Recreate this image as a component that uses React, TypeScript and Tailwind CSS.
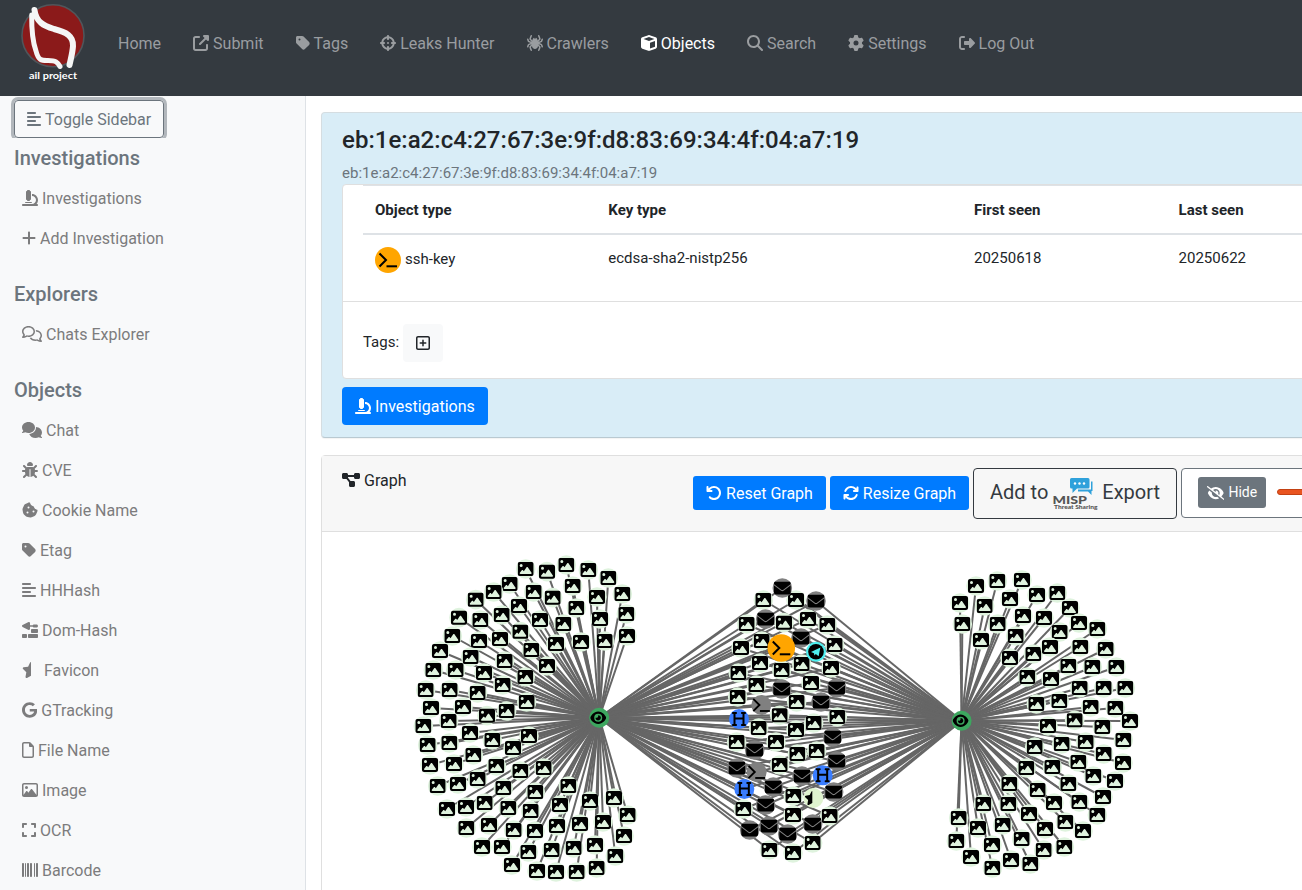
import type { ReactNode } from "react";
import type { IconType } from "react-icons";
import {
  FaUpRightFromSquare, FaTag, FaCrosshairs, FaSpider, FaCube, FaMagnifyingGlass, FaGear,
  FaRightFromBracket, FaAlignLeft, FaMicroscope, FaPlus, FaRegComments, FaComments, FaBug,
  FaCookieBite, FaTrowelBricks, FaStarHalf, FaGoogle, FaRegFile, FaRegImage, FaExpand,
  FaBarcode, FaArrowRotateLeft, FaArrowsRotate, FaEyeSlash, FaDiagramProject, FaRegSquarePlus,
  FaImage, FaEnvelope, FaHeading, FaEye,
} from "react-icons/fa6";

type Point = [number, number];
type Item = { label: string; icon?: IconType; width?: string; active?: boolean };

const NAV: Item[] = [
  { label: "Home" },
  { label: "Submit", icon: FaUpRightFromSquare, width: "w-4" },
  { label: "Tags", icon: FaTag, width: "w-3.5" },
  { label: "Leaks Hunter", icon: FaCrosshairs, width: "w-4" },
  { label: "Crawlers", icon: FaSpider, width: "w-4" },
  { label: "Objects", icon: FaCube, width: "w-4", active: true },
  { label: "Search", icon: FaMagnifyingGlass, width: "w-4" },
  { label: "Settings", icon: FaGear, width: "w-4" },
  { label: "Log Out", icon: FaRightFromBracket, width: "w-4" },
];

const SECTIONS: { title: string; items: Item[] }[] = [
  {
    title: "Investigations",
    items: [
      { label: "Investigations", icon: FaMicroscope, width: "w-4" },
      { label: "Add Investigation", icon: FaPlus, width: "w-3.5" },
    ],
  },
  { title: "Explorers", items: [{ label: "Chats Explorer", icon: FaRegComments, width: "w-5" }] },
  {
    title: "Objects",
    items: [
      { label: "Chat", icon: FaComments, width: "w-5" },
      { label: "CVE", icon: FaBug, width: "w-4" },
      { label: "Cookie Name", icon: FaCookieBite, width: "w-4" },
      { label: "Etag", icon: FaTag, width: "w-3.5" },
      { label: "HHHash", icon: FaAlignLeft, width: "w-3.5" },
      { label: "Dom-Hash", icon: FaTrowelBricks, width: "w-4" },
      { label: "Favicon", icon: FaStarHalf, width: "w-[18px]" },
      { label: "GTracking", icon: FaGoogle, width: "w-[15.25px]" },
      { label: "File Name", icon: FaRegFile, width: "w-3" },
      { label: "Image", icon: FaRegImage, width: "w-4" },
      { label: "OCR", icon: FaExpand, width: "w-3.5" },
      { label: "Barcode", icon: FaBarcode, width: "w-4" },
    ],
  },
];

/* Node positions are stored at triple resolution, relative to a cluster origin. */
function place(ox: number, oy: number, list: Point[]): Point[] {
  return list.map(([x, y]) => [ox + x / 3, oy + y / 3]);
}

const LEFT_HUB: Point = [599.2, 717.8];
const RIGHT_HUB: Point = [961.6, 720.7];

const LEFT = [
  ...place(405, 545, [
    [362, 72], [426, 80], [484, 60], [550, 75], [610, 99], [314, 117], [266, 141], [386, 141],
    [443, 158], [503, 123], [576, 156], [652, 147], [212, 164], [342, 183], [514, 189], [664, 207],
    [162, 218], [226, 225], [290, 210], [405, 225], [475, 237], [585, 222], [142, 273], [222, 288],
    [285, 282], [346, 260], [453, 297], [528, 291], [599, 288], [666, 273], [105, 318], [197, 336],
    [379, 315], [299, 348], [426, 363], [85, 375], [152, 375], [237, 384], [361, 396], [293, 420],
    [62, 435], [134, 435], [218, 444], [78, 489], [174, 486], [305, 498], [365, 471], [246, 512],
  ]),
  ...place(405, 715, [
    [55, 33], [131, 18], [195, 54], [68, 90], [133, 84], [262, 75], [372, 63], [324, 99], [75, 150],
    [147, 147], [205, 120], [274, 153], [346, 168], [416, 159], [98, 213], [159, 207], [218, 192],
    [295, 219], [391, 231], [490, 213], [126, 282], [183, 276], [239, 264], [310, 279], [377, 288],
    [465, 270], [555, 258], [627, 249], [668, 300], [184, 339], [252, 330], [326, 345], [390, 348],
    [456, 333], [525, 327], [594, 321], [657, 363], [231, 396], [291, 396], [370, 411], [440, 405],
    [506, 399], [570, 390], [631, 423], [321, 450], [396, 468], [453, 471], [515, 471], [575, 459],
  ]),
];

const RIGHT = [
  ...place(940, 560, [
    [108, 78], [172, 63], [246, 60], [60, 129], [134, 138], [210, 117], [291, 105], [352, 99],
    [67, 192], [173, 192], [249, 168], [312, 174], [390, 144], [417, 189], [472, 207], [123, 240],
    [227, 228], [359, 216], [210, 294], [280, 282], [330, 261], [421, 261], [497, 267], [262, 351],
    [333, 357], [385, 318], [457, 321], [529, 321], [419, 384], [491, 384], [556, 384], [289, 432],
    [358, 423], [452, 441], [526, 444],
  ]),
  ...place(940, 715, [
    [324, 33], [404, 16], [487, 36], [570, 18], [550, 75], [284, 96], [365, 87], [437, 81],
    [491, 117], [259, 159], [337, 156], [415, 141], [549, 144], [208, 207], [293, 225], [385, 207],
    [460, 183], [525, 198], [130, 267], [205, 267], [342, 264], [418, 261], [489, 246], [56, 309],
    [267, 297], [472, 300], [114, 339], [188, 330], [315, 342], [376, 321], [429, 348], [49, 378],
    [156, 390], [245, 372], [311, 405], [373, 396], [93, 426], [213, 435], [271, 447], [157, 459],
  ]),
];

const SHARED_IMAGES = [
  ...place(710, 570, [
    [160, 90], [258, 90], [110, 162], [222, 158], [294, 147], [352, 165], [155, 213], [93, 234],
    [374, 225], [150, 279], [85, 309], [215, 300], [275, 282], [363, 294], [139, 345], [303, 339],
    [83, 381], [260, 396], [209, 436], [382, 441],
  ]),
  ...place(710, 715, [
    [146, 39], [258, 45], [311, 24], [80, 81], [198, 81], [262, 117], [320, 108], [209, 150],
    [250, 243], [249, 300], [359, 303], [100, 282], [308, 384], [178, 405], [249, 414],
  ]),
];

const MAILS = [
  ...place(710, 570, [[217, 54], [318, 93], [167, 147], [273, 204], [215, 357], [380, 354], [333, 396]]),
  ...place(710, 715, [
    [368, 66], [134, 105], [380, 138], [81, 159], [276, 183], [190, 216], [371, 231], [167, 270],
    [119, 345], [177, 333], [233, 357], [308, 327],
  ]),
];

const HEADINGS = place(710, 715, [[87, 12], [338, 181], [103, 222]]);
const GREY_KEYS = [...place(710, 570, [[154, 405]]), ...place(710, 715, [[140, 171]])];
const KEY: Point = [781.3, 648];
const TELEGRAM: Point = [816, 651.7];
const FAVICON: Point = [813.3, 798];

const SHARED: Point[] = [
  ...SHARED_IMAGES, ...MAILS, ...HEADINGS, ...GREY_KEYS, KEY, TELEGRAM, FAVICON,
];

const EDGES: [Point, Point][] = [
  ...LEFT.map((p): [Point, Point] => [p, LEFT_HUB]),
  ...RIGHT.map((p): [Point, Point] => [p, RIGHT_HUB]),
  ...SHARED.flatMap((p): [Point, Point][] => [[p, LEFT_HUB], [p, RIGHT_HUB]]),
];

function Prompt({ x, y, s }: { x: number; y: number; s: number }) {
  return (
    <g transform={`translate(${x} ${y}) scale(${s})`} fill="none" stroke="#000" strokeWidth="2">
      <path d="M-8.500 -6.500 L-2 0 L-8.500 6.500" />
      <path d="M-1.500 6.300 H9" />
    </g>
  );
}

function ImageNode({ p: [x, y] }: { p: Point }) {
  return (
    <g>
      <circle cx={x} cy={y} r="9.8" fill="#dff3de" />
      <FaImage x={x - 8} y={y - 8} size={16} color="#000" />
    </g>
  );
}

function Graph() {
  return (
    <svg className="h-[358px] w-[980px] shrink-0" viewBox="322 532 980 358">
      <g stroke="#666" strokeWidth="2">
        {EDGES.map(([a, b], i) => (
          <line key={i} x1={a[0]} y1={a[1]} x2={b[0]} y2={b[1]} />
        ))}
      </g>
      {[...LEFT, ...RIGHT, ...SHARED_IMAGES].map((p, i) => <ImageNode key={i} p={p} />)}
      {MAILS.map(([x, y], i) => (
        <g key={i}>
          <circle cx={x} cy={y} r="9.8" fill="#808080" />
          <FaEnvelope x={x - 8.5} y={y - 8.5} size={17} color="#000" />
        </g>
      ))}
      {GREY_KEYS.map(([x, y], i) => (
        <g key={i}>
          <circle cx={x} cy={y} r="10" fill="#808080" />
          <Prompt x={x} y={y} s={0.95} />
        </g>
      ))}
      {HEADINGS.map(([x, y], i) => (
        <g key={i}>
          <circle cx={x} cy={y} r="10" fill="#3a7dff" />
          <FaHeading x={x - 8} y={y - 8} size={16} color="#000" />
        </g>
      ))}
      <circle cx={FAVICON[0]} cy={FAVICON[1]} r="10" fill="#dff3cf" />
      <FaStarHalf x={FAVICON[0] - 9} y={FAVICON[1] - 8} width={18} height={16} color="#000" />
      <circle cx={KEY[0]} cy={KEY[1]} r="13.8" fill="#ffa500" />
      <Prompt x={KEY[0]} y={KEY[1]} s={1} />
      <circle cx={TELEGRAM[0]} cy={TELEGRAM[1]} r="10" fill="#4ef0f0" />
      <circle cx={TELEGRAM[0]} cy={TELEGRAM[1]} r="7.8" fill="#000" />
      <path d="M811 652 L820.4 647.6 L818.6 656.2 L815.8 654 L814.4 655.6 L814 653.2 Z" fill="#4ef0f0" />
      {[LEFT_HUB, RIGHT_HUB].map(([x, y], i) => (
        <g key={i}>
          <circle cx={x} cy={y} r="10" fill="#3da75f" />
          <FaEye x={x - 9} y={y - 8} width={18} height={16} color="#000" />
        </g>
      ))}
    </svg>
  );
}

function Logo() {
  return (
    <svg className="h-20 w-[68px]" viewBox="19 2 68 80">
      <circle cx="53" cy="35.700" r="31" fill="#8b1a1a" stroke="#50565b" strokeWidth="1.6" />
      <g fill="none" stroke="#f5f5f5" strokeLinecap="round" strokeLinejoin="round">
        <path strokeWidth="5" d="M31.700 15 C31.500 30 33.500 44 36 51 C38.500 61 42 60.500 48 60.500 C56 60.500 57.500 62 60 66.500" />
        <path strokeWidth="6" d="M34.500 10 C36 22 44 26 54 29 C66 32 73.500 36 73 46 C72.500 53 71 58 69.500 65" />
      </g>
      <text x="53" y="78.600" textAnchor="middle" fill="#fff" className="font-['Lato'] text-[10.3px] font-bold" textLength="48" lengthAdjust="spacingAndGlyphs">ail project</text>
    </svg>
  );
}

function MispLogo() {
  return (
    <svg className="h-[34px] w-[46px]" viewBox="1052 477 46 34">
      <path d="M1091 481.500 H1092.500 V491 H1091.500 V495 L1088 491.500 H1078 V489.500 H1091 Z" fill="#2fa1db" />
      <path d="M1071.500 478 H1088 Q1089.500 478 1089.500 479.500 V487 Q1089.500 488.500 1088 488.500 H1077 L1072.500 493 V488.500 H1071.500 Q1070 488.500 1070 487 V479.500 Q1070 478 1071.500 478 Z" fill="#2fa1db" />
      <g fill="#fff">
        <circle cx="1075" cy="483.500" r="1.200" />
        <circle cx="1079.500" cy="483.500" r="1.200" />
        <circle cx="1084" cy="483.500" r="1.200" />
      </g>
      <text x="1052.500" y="503.500" textLength="34.500" lengthAdjust="spacingAndGlyphs" fill="#555" className="font-['Lato'] text-[12px] font-black">MISP</text>
      <text x="1054" y="509.300" textLength="43.500" lengthAdjust="spacingAndGlyphs" fill="#555" className="font-['Lato'] text-[5.6px] font-black">Threat Sharing</text>
    </svg>
  );
}

function Label({ item }: { item: Item }) {
  const Icon = item.icon;
  return (
    <>
      {Icon && <Icon className={`h-4 ${item.width} shrink-0`} />}
      <span className="whitespace-nowrap pt-0.5">{item.label}</span>
    </>
  );
}

function Th({ children, width }: { children: ReactNode; width: string }) {
  return <div className={`${width} shrink-0 px-3 pt-0.5 font-bold`}>{children}</div>;
}

export default function App() {
  return (
    <div className="flex h-[890px] w-[1302px] flex-col overflow-hidden bg-white font-['Roboto',sans-serif] text-base text-[#212529]">
      <header className="flex h-24 shrink-0 bg-[#343a40] pl-[19px] pt-0.5">
        <Logo />
        <nav className="flex h-[82px] items-center gap-8 pl-[31px]">
          {NAV.map((item) => (
            <a key={item.label} className={item.active ? "flex items-center gap-1 text-white" : "flex items-center gap-1 text-[#9a9da0]"}>
              <Label item={item} />
            </a>
          ))}
        </nav>
      </header>
      <div className="flex min-h-0 flex-1">
        <aside className="flex w-[306px] shrink-0 flex-col overflow-hidden border-r border-[#dee2e6] bg-[#f8f9fa]">
          <div className="h-[42px] shrink-0 overflow-hidden pl-3.5 pt-1">
            <button className="flex h-[38px] w-[150px] items-center gap-1 rounded border border-[#6c757d] pl-3 text-[#6c757d] shadow-[0_0_0_3px_rgba(108,117,125,0.5)]">
              <FaAlignLeft className="h-4 w-3.5" />
              <span className="whitespace-nowrap pt-0.5">Toggle Sidebar</span>
            </button>
          </div>
          {SECTIONS.map((section) => (
            <section key={section.title} className="mb-4 shrink-0">
              <h5 className="flex h-10 items-center pl-3.5 text-xl font-medium text-[#6c757d]">{section.title}</h5>
              {section.items.map((item) => (
                <a key={item.label} className="flex h-10 items-center gap-1 pl-[22px] text-[#7c7c7d]">
                  <Label item={item} />
                </a>
              ))}
            </section>
          ))}
        </aside>
        <main className="flex min-w-0 flex-1 flex-col overflow-hidden pl-[15px] pt-4">
          <section className="flex h-[326px] w-[1040px] shrink-0 flex-col rounded border border-[#d5dde1] border-b-[#b9c9d1] bg-[#d9edf7] pl-5 shadow-[0_1px_1px_rgba(0,0,0,0.05)]">
            <h4 className="mt-[13px] text-2xl leading-[29px] font-medium tracking-[0.025px]">eb:1e:a2:c4:27:67:3e:9f:d8:83:69:34:4f:04:a7:19</h4>
            <div className="mt-[7px] h-[22px] text-[15px] leading-[22px] text-[#6c757d]">eb:1e:a2:c4:27:67:3e:9f:d8:83:69:34:4f:04:a7:19</div>
            <div className="flex h-[195px] flex-col rounded border border-[#dfdfdf] bg-white text-[15px]">
              <div className="ml-5 flex h-[50px] shrink-0 items-center border-t border-b-2 border-[#dee2e6]">
                <Th width="w-[233.3px]">Object type</Th>
                <Th width="w-[365.7px]">Key type</Th>
                <Th width="w-[204.6px]">First seen</Th>
                <Th width="w-[200px]">Last seen</Th>
              </div>
              <div className="ml-5 flex h-[66px] shrink-0 pt-3">
                <div className="flex h-[26px] w-[233.3px] shrink-0 items-center gap-1 pl-3">
                  <svg className="size-[26px]" viewBox="-13 -13 26 26">
                    <circle r="13" fill="#ffa500" />
                    <Prompt x={0} y={0} s={1} />
                  </svg>
                  <span className="pb-0.5 leading-6">ssh-key</span>
                </div>
                <div className="w-[365.7px] shrink-0 pl-3 leading-[22px]">ecdsa-sha2-nistp256</div>
                <div className="w-[204.6px] shrink-0 pl-3 leading-[22px]">20250618</div>
                <div className="w-[200px] shrink-0 pl-3 leading-[22px]">20250622</div>
              </div>
              <div className="flex h-[77px] items-center gap-1 border-t border-[#dfdfdf] pl-5 pt-1.5">
                <span className="pb-0.5">Tags:</span>
                <button className="flex h-[38px] w-10 items-center justify-center rounded bg-[#f8f9fa]">
                  <FaRegSquarePlus className="h-4 w-3.5" />
                </button>
              </div>
            </div>
            <button className="mt-2 flex h-[38px] w-[146px] items-center gap-1 rounded bg-[#007bff] pl-[13px] text-white">
              <FaMicroscope className="size-4" />
              <span className="pt-0.5">Investigations</span>
            </button>
          </section>
          <section className="mt-[17px] flex h-[460px] w-[1040px] shrink-0 flex-col rounded border border-[#dfdfdf]">
            <div className="flex h-[76px] shrink-0 justify-between border-b border-[#dfdfdf] bg-[#f7f7f7]">
              <div className="flex h-12 items-center gap-1 pl-5">
                <FaDiagramProject className="h-4 w-[18px]" />
                <span className="pt-0.5">Graph</span>
              </div>
              <div className="flex w-[667px] shrink-0 gap-1 pt-3">
                <button className="mt-2 flex h-[34px] w-[133px] shrink-0 items-center justify-center gap-1 rounded-[3px] bg-[#007bff] text-white">
                  <FaArrowRotateLeft className="size-4" />
                  <span className="pt-0.5">Reset Graph</span>
                </button>
                <button className="mt-2 flex h-[34px] w-[139px] shrink-0 items-center justify-center gap-1 rounded-[3px] bg-[#007bff] text-white">
                  <FaArrowsRotate className="size-4" />
                  <span className="pt-0.5">Resize Graph</span>
                </button>
                <button className="flex h-[51px] w-[204px] shrink-0 rounded border border-[#343a40] pl-4 text-xl text-[#343a40]">
                  <span className="flex h-[46px] items-center">Add to</span>
                  <span className="ml-1 mt-2"><MispLogo /></span>
                  <span className="ml-1 flex h-[46px] items-center">Export</span>
                </button>
                <div className="flex h-[50px] w-[400px] shrink-0 rounded border border-[#6c757d] bg-white pl-4 pt-2">
                  <button className="flex h-[31px] w-[68px] items-center justify-center gap-1 rounded-[3px] bg-[#6c757d] text-sm text-white">
                    <FaEyeSlash className="h-3.5 w-[17.5px]" />
                    <span className="pb-0.5">Hide</span>
                  </button>
                  <div className="ml-[11px] mt-3 h-1.5 w-60 rounded-full border border-[#c34113] bg-[#e95420]" />
                </div>
              </div>
            </div>
            <Graph />
          </section>
        </main>
      </div>
    </div>
  );
}
